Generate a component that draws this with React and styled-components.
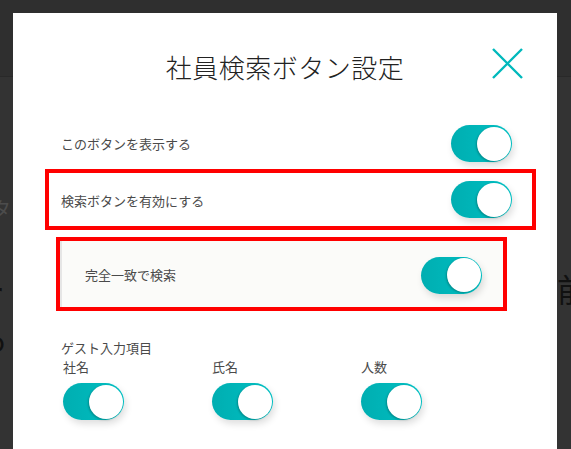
import React from 'react';
import styled, { createGlobalStyle } from 'styled-components';

const teal = '#00b9bc';
const font = '"Noto Sans CJK JP", "Noto Sans", sans-serif';

//-- STYLES --//
const Global = createGlobalStyle`
  html, body {
    margin: 0;
    padding: 0;
    background: #333333;
    overflow: hidden;
  }
  * { box-sizing: border-box; }
`;

const BackPage = styled.div`
  width: 571px;
  height: 449px;
  font-family: ${font};
  display: flex;
  flex-direction: column;
`;

const BackHeader = styled.div`
  height: 77px;
  background: #2f2f2f;
  border-bottom: 1px solid #292929;
`;

const BackLine = styled.div`
  display: flex;
  justify-content: space-between;
  align-items: center;
  height: ${p => p.h}px;
  margin-top: ${p => p.top}px;
  font-size: ${p => p.size}px;
  color: ${p => p.color};
  line-height: 1;
`;

const Clip = styled.span`
  margin-left: ${p => p.ml || 0}px;
  margin-right: ${p => p.mr || 0}px;
`;

const Modal = styled.div`
  position: fixed;
  top: 13px;
  left: 13px;
  width: 544px;
  bottom: 0;
  background: #ffffff;
  font-family: ${font};
  color: #4a4a4a;
`;

const Header = styled.div`
  position: relative;
  padding-top: 36px;
  text-align: center;
`;

const Title = styled.h2`
  margin: 0;
  font-size: 26px;
  line-height: 36px;
  font-weight: 300;
  color: #222222;
  letter-spacing: 0.5px;
`;

const Close = styled.button`
  position: absolute;
  top: 35px;
  left: 479px;
  width: 31px;
  height: 31px;
  padding: 0;
  border: none;
  background: none;
  cursor: pointer;
  display: flex;
`;

const Body = styled.div`
  padding: 40px 21px 0 32px;
  display: flex;
  flex-direction: column;
`;

const Row = styled.div`
  display: flex;
  justify-content: space-between;
  align-items: center;
  height: 37px;
  padding: 0 24px 0 16px;
`;

const Marked = styled.div`
  display: flex;
  justify-content: space-between;
  align-items: center;
  border: 4px solid #ff0000;
  margin-top: 7px;
  height: ${p => p.h}px;
  margin-left: ${p => p.indent || 0}px;
  margin-right: ${p => p.outdent || 0}px;
  padding: ${p => p.pad};
  background: ${p => p.bg || '#ffffff'};
`;

const SubInner = styled.div`
  flex: 1;
  align-self: stretch;
  display: flex;
  justify-content: space-between;
  align-items: center;
  background: #fbfbf9;
  border-left: 2px solid #e6e6e6;
  padding: 2px 21px 0 23px;
`;

const Label = styled.span`
  font-size: 13px;
  line-height: 18px;
  color: #4a4a4a;
  padding-top: ${p => p.pt || 0}px;
`;

const Track = styled.div`
  position: relative;
  flex: none;
  width: 61px;
  height: 37px;
  border-radius: 19px;
  background: linear-gradient(to right, #00aeb1, #00c0c3);
  box-shadow: 2px 4px 7px rgba(0, 0, 0, 0.13);
`;

const Knob = styled.div`
  position: absolute;
  top: 1.5px;
  right: 1.5px;
  width: 34px;
  height: 34px;
  border-radius: 50%;
  background: #ffffff;
  box-shadow: -1px 1px 2px rgba(0, 60, 60, 0.35);
`;

const Guest = styled.div`
  margin-top: 23px;
  padding-left: 16px;
`;

const GuestGrid = styled.div`
  display: grid;
  grid-template-columns: 149px 149px 149px;
  padding-left: 2px;
`;

const GuestCell = styled.div`
  display: flex;
  flex-direction: column;
  align-items: flex-start;
  gap: 7px;
`;

//-- COMPONENT --//
const Toggle = () => (
  <Track>
    <Knob />
  </Track>
);

const guestFields = ['社名', '氏名', '人数'];

const App = () => {
  return (
    <>
      <Global />
      <BackPage>
        <BackHeader />
        <BackLine h={24} top={120} size={20} color="#4c4c4c">
          <Clip ml={-9}>タ</Clip>
        </BackLine>
        <BackLine h={34} top={50} size={32} color="#111111">
          <Clip ml={-27}>ー</Clip>
          <Clip mr={-18}>前</Clip>
        </BackLine>
        <BackLine h={30} top={20} size={28} color="#111111">
          <Clip ml={-12}>o</Clip>
        </BackLine>
      </BackPage>

      <Modal>
        <Header>
          <Title>社員検索ボタン設定</Title>
          <Close aria-label="close">
            <svg width="31" height="31" viewBox="0 0 31 31">
              <path d="M1 1 L30 30 M30 1 L1 30" stroke={teal} strokeWidth="2.4" fill="none" />
            </svg>
          </Close>
        </Header>

        <Body>
          <Row>
            <Label>このボタンを表示する</Label>
            <Toggle />
          </Row>

          <Marked h={61} pad="0 20px 0 12px">
            <Label pt={3}>検索ボタンを有効にする</Label>
            <Toggle />
          </Marked>

          <Marked h={74} indent={11} outdent={29} pad="0">
            <SubInner>
              <Label>完全一致で検索</Label>
              <Toggle />
            </SubInner>
          </Marked>

          <Guest>
            <Label>ゲスト入力項目</Label>
            <GuestGrid>
              {guestFields.map(name => (
                <GuestCell key={name}>
                  <Label>{name}</Label>
                  <Toggle />
                </GuestCell>
              ))}
            </GuestGrid>
          </Guest>
        </Body>
      </Modal>
    </>
  );
};

export default App;
